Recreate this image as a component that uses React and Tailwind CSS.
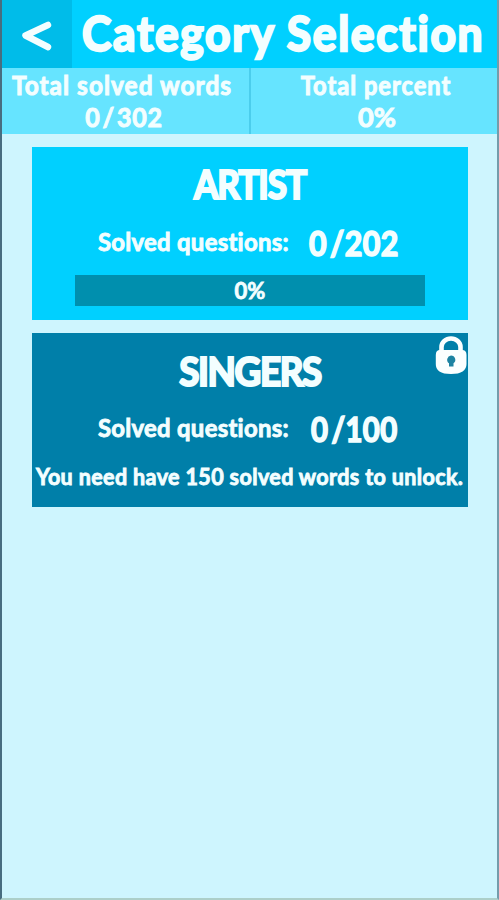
function LockIcon() {
  return (
    <svg className="absolute top-[3px] right-[1px] h-[39px] w-[32px]" viewBox="0 0 32 39">
      <path d="M6.500 18V11a9.500 8.500 0 0 1 19 0V18" fill="none" stroke="#fbffff" strokeWidth="4.600" />
      <path d="M5 14H27Q31.500 14 31.500 19V28Q31.500 38 16 38T.8 28V19Q.8 14 5 14Z" fill="#fbffff" />
      <path d="M16 19.500a4.300 4.300 0 0 1 2.500 7.800L18.500 30.500H14L14 27.300A4.300 4.300 0 0 1 16 19.500Z" fill="#1d83a2" />
    </svg>
  );
}

function Solved({ children }) {
  return (
    <div className="flex h-[40px] items-center">
      <span className="ml-[66px] w-[211px] origin-left scale-x-[0.955] text-[25px] tracking-[0.3px] [-webkit-text-stroke:0.9px_#f3feff]">Solved questions:</span>
      {children}
    </div>
  );
}

export default function App() {
  return (
    <main className="flex h-[900px] w-[499px] flex-col overflow-hidden border-r-2 border-b-2 border-l-2 border-r-[#749cab] border-b-[#accfc9] border-l-[#476d80] bg-[#cef5fe] font-['Lato',sans-serif] font-bold whitespace-nowrap text-[#f3feff] [paint-order:stroke_fill] [stroke-linejoin:round]">
      <header className="flex h-[68px] shrink-0 bg-[#00d0ff]">
        <button aria-label="Back" className="flex w-[70px] shrink-0 items-center justify-center bg-[#00bce9]">
          <svg className="mt-[3px] -ml-[2px] h-[32px] w-[31px]" viewBox="0 0 31 32">
            <path d="M27 5 4.500 15.500 27 27" fill="none" stroke="#f3feff" strokeWidth="6.500" strokeLinecap="round" strokeLinejoin="round" />
          </svg>
        </button>
        <h1 className="ml-[10px] origin-left scale-x-[0.925] text-[48px] leading-[66px] tracking-[1.800px] [-webkit-text-stroke:2.400px_#f3feff]">Category Selection</h1>
      </header>
      <section className="flex h-[66px] shrink-0 bg-[#66e4ff] text-center text-[26px] leading-[32px] [-webkit-text-stroke:1px_#f3feff]">
        <div className="w-[249px] border-r-2 border-[#4bcdec] pt-[1px]">
          <p className="-ml-[7px] scale-x-[0.94] tracking-[1.100px]">Total solved words</p>
          <p className="-ml-[3px] scale-x-[0.96] tracking-[0.8px]"><span className="tracking-[3px]">0/</span>302</p>
        </div>
        <div className="flex-1 pt-[1px]">
          <p className="ml-[4px] scale-x-[0.91] tracking-[1.100px]">Total percent</p>
          <p className="ml-[6px] scale-x-[1.04]">0%</p>
        </div>
      </section>
      <section className="mt-[13px] ml-[30px] h-[173px] w-[436px] shrink-0 bg-[#00d0ff] pt-[12px]">
        <h2 className="h-[50px] scale-x-[0.88] text-center text-[40px] leading-[50px] tracking-[-1.200px] [-webkit-text-stroke:2.200px_#f3feff]">ARTIST</h2>
        <div className="mt-[13px]">
          <Solved><span className="origin-left scale-x-[0.89] text-[34px] tracking-[0.5px] [-webkit-text-stroke:1.700px_#f3feff]"><span className="tracking-[4px]">0</span>/202</span></Solved>
        </div>
        <div className="mt-[13px] ml-[43px] h-[31px] w-[350px] bg-[#008fae] text-center text-[22px] leading-[31px] [-webkit-text-stroke:0.8px_#f3feff]">0%</div>
      </section>
      <section className="relative mt-[13px] ml-[30px] h-[174px] w-[436px] shrink-0 bg-[#007fa9] pt-[13px]">
        <LockIcon />
        <h2 className="h-[50px] scale-x-[0.92] text-center text-[40px] leading-[50px] tracking-[-1.500px] [-webkit-text-stroke:2.200px_#f3feff]">SINGERS</h2>
        <div className="mt-[12px]">
          <Solved><span className="ml-[2px] origin-left scale-x-[0.86] text-[34px] tracking-[0.5px] [-webkit-text-stroke:1.700px_#f3feff]"><span className="tracking-[4px]">0</span>/100</span></Solved>
        </div>
        <p className="mt-[12px] ml-[4px] origin-left scale-x-[0.935] text-[23px] leading-[32px] tracking-[0.4px] [-webkit-text-stroke:0.9px_#f3feff]">You need have 150 solved words to unlock.</p>
      </section>
    </main>
  );
}
